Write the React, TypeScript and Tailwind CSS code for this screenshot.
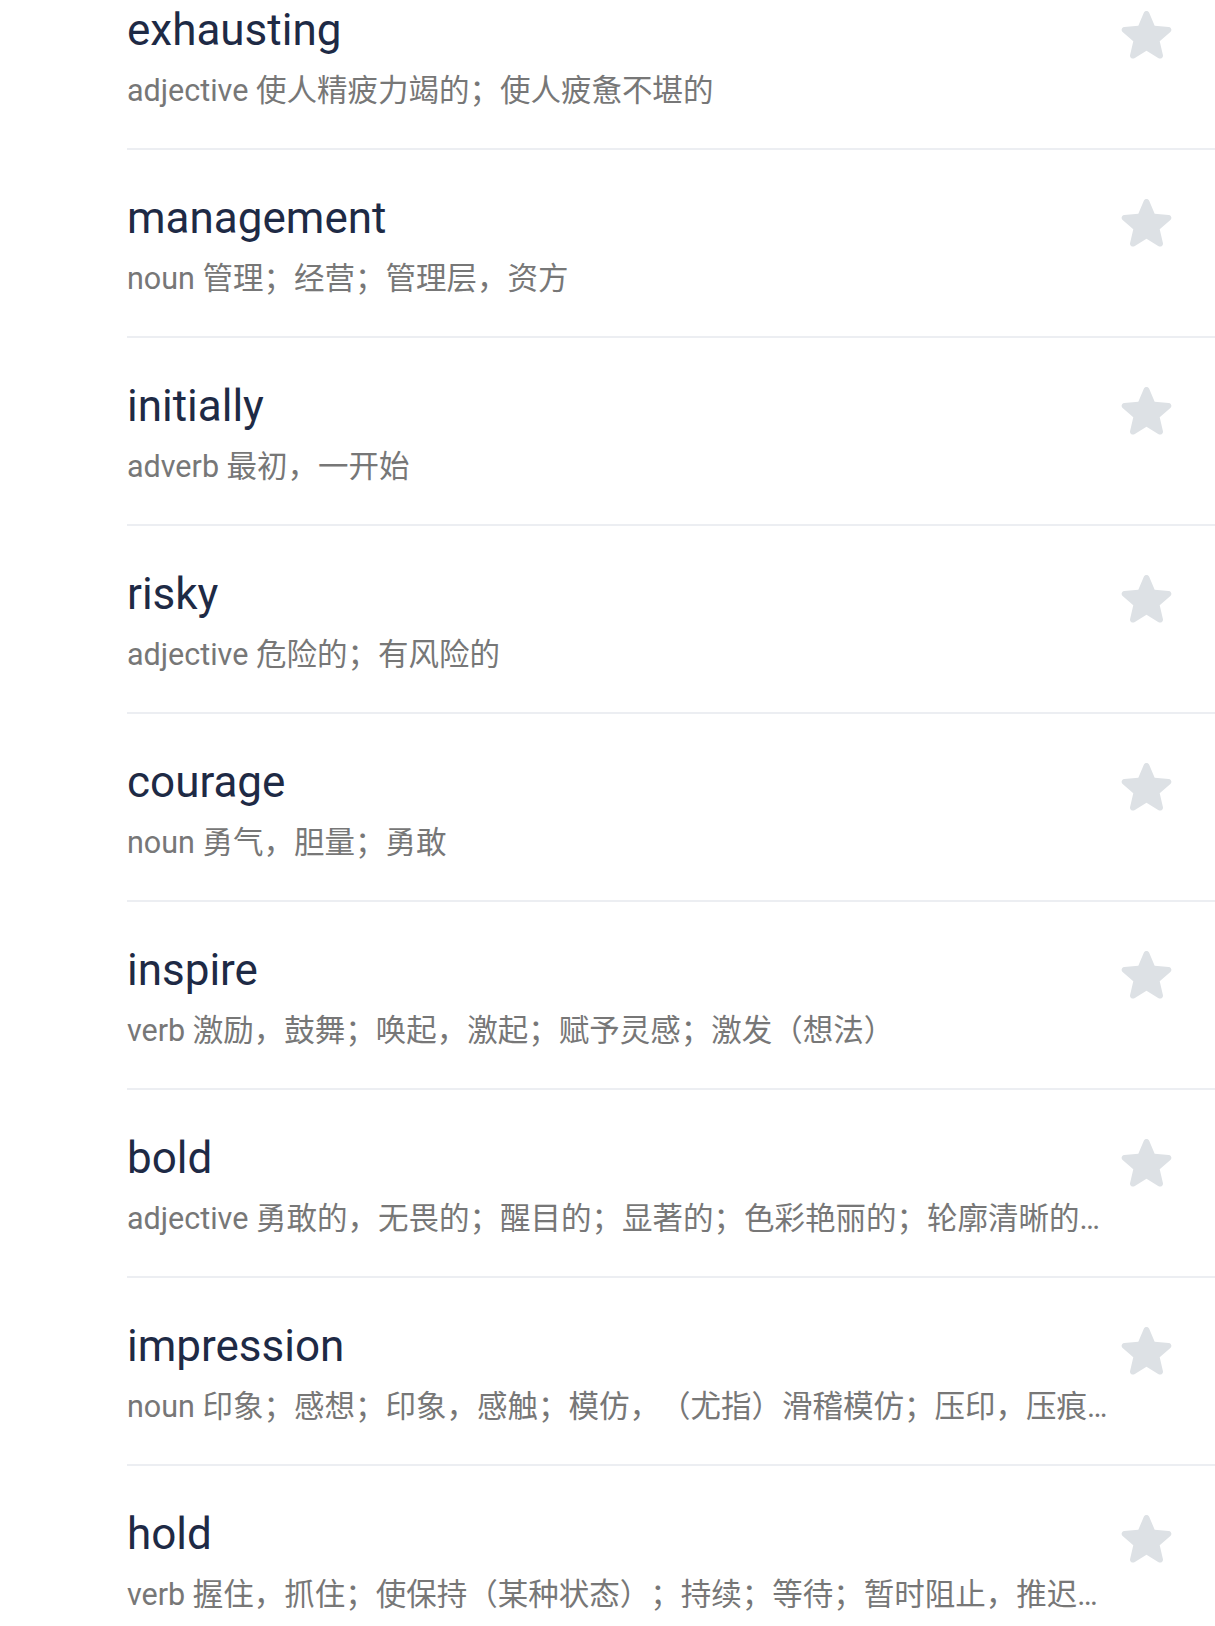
import React from "react";

interface Word {
  word: string;
  pos: string;
  meaning: string;
}

const words: Word[] = [
  { word: "exhausting", pos: "adjective", meaning: "使人精疲力竭的；使人疲惫不堪的" },
  { word: "management", pos: "noun", meaning: "管理；经营；管理层，资方" },
  { word: "initially", pos: "adverb", meaning: "最初，一开始" },
  { word: "risky", pos: "adjective", meaning: "危险的；有风险的" },
  { word: "courage", pos: "noun", meaning: "勇气，胆量；勇敢" },
  { word: "inspire", pos: "verb", meaning: "激励，鼓舞；唤起，激起；赋予灵感；激发（想法）" },
  {
    word: "bold",
    pos: "adjective",
    meaning: "勇敢的，无畏的；醒目的；显著的；色彩艳丽的；轮廓清晰的；粗体的，黑体的",
  },
  {
    word: "impression",
    pos: "noun",
    meaning: "印象；感想；印象，感触；模仿，（尤指）滑稽模仿；压印，压痕；印数",
  },
  {
    word: "hold",
    pos: "verb",
    meaning: "握住，抓住；使保持（某种状态）；持续；等待；暂时阻止，推迟；容纳",
  },
];

function StarIcon() {
  return (
    <svg
      className="w-[51px] h-[48px] shrink-0"
      viewBox="3.25 3.57 17.5 16.5"
      fill="#dde1e5"
    >
      <path d="M12 17.27l4.15 2.51c.76.46 1.69-.22 1.49-1.08l-1.1-4.72 3.67-3.18c.67-.58.31-1.68-.57-1.75l-4.83-.41-1.89-4.46c-.34-.81-1.5-.81-1.84 0L9.19 8.63l-4.83.41c-.88.07-1.24 1.17-.57 1.75l3.67 3.18-1.1 4.72c-.2.86.73 1.54 1.49 1.08l4.15-2.5z" />
    </svg>
  );
}

export default function App() {
  return (
    <div
      className="w-full h-[1626px] overflow-hidden bg-white"
      style={{ fontFamily: 'Roboto, "Noto Sans CJK SC", sans-serif' }}
    >
      <div className="-mt-[38px]">
        {words.map((w, i) => (
          <div key={i} className="pl-[127px]">
            <div className="h-[188px] flex items-start border-b-2 border-[#eceef2]">
              {/* Text */}
              <div className="flex-1 min-w-0 pt-[42px]">
                <div className="h-[52px] leading-[52px] text-[44px] text-[#1e2a45]">{w.word}</div>
                <div className="mt-[15px] h-[40px] leading-[40px] text-[30.5px] text-[#777777] truncate [text-spacing-trim:space-all]">
                  {w.pos} {w.meaning}
                </div>
              </div>

              {/* Favourite */}
              <div className="pt-[49px] ml-[9px] mr-[43px]">
                <StarIcon />
              </div>
            </div>
          </div>
        ))}
      </div>
    </div>
  );
}
